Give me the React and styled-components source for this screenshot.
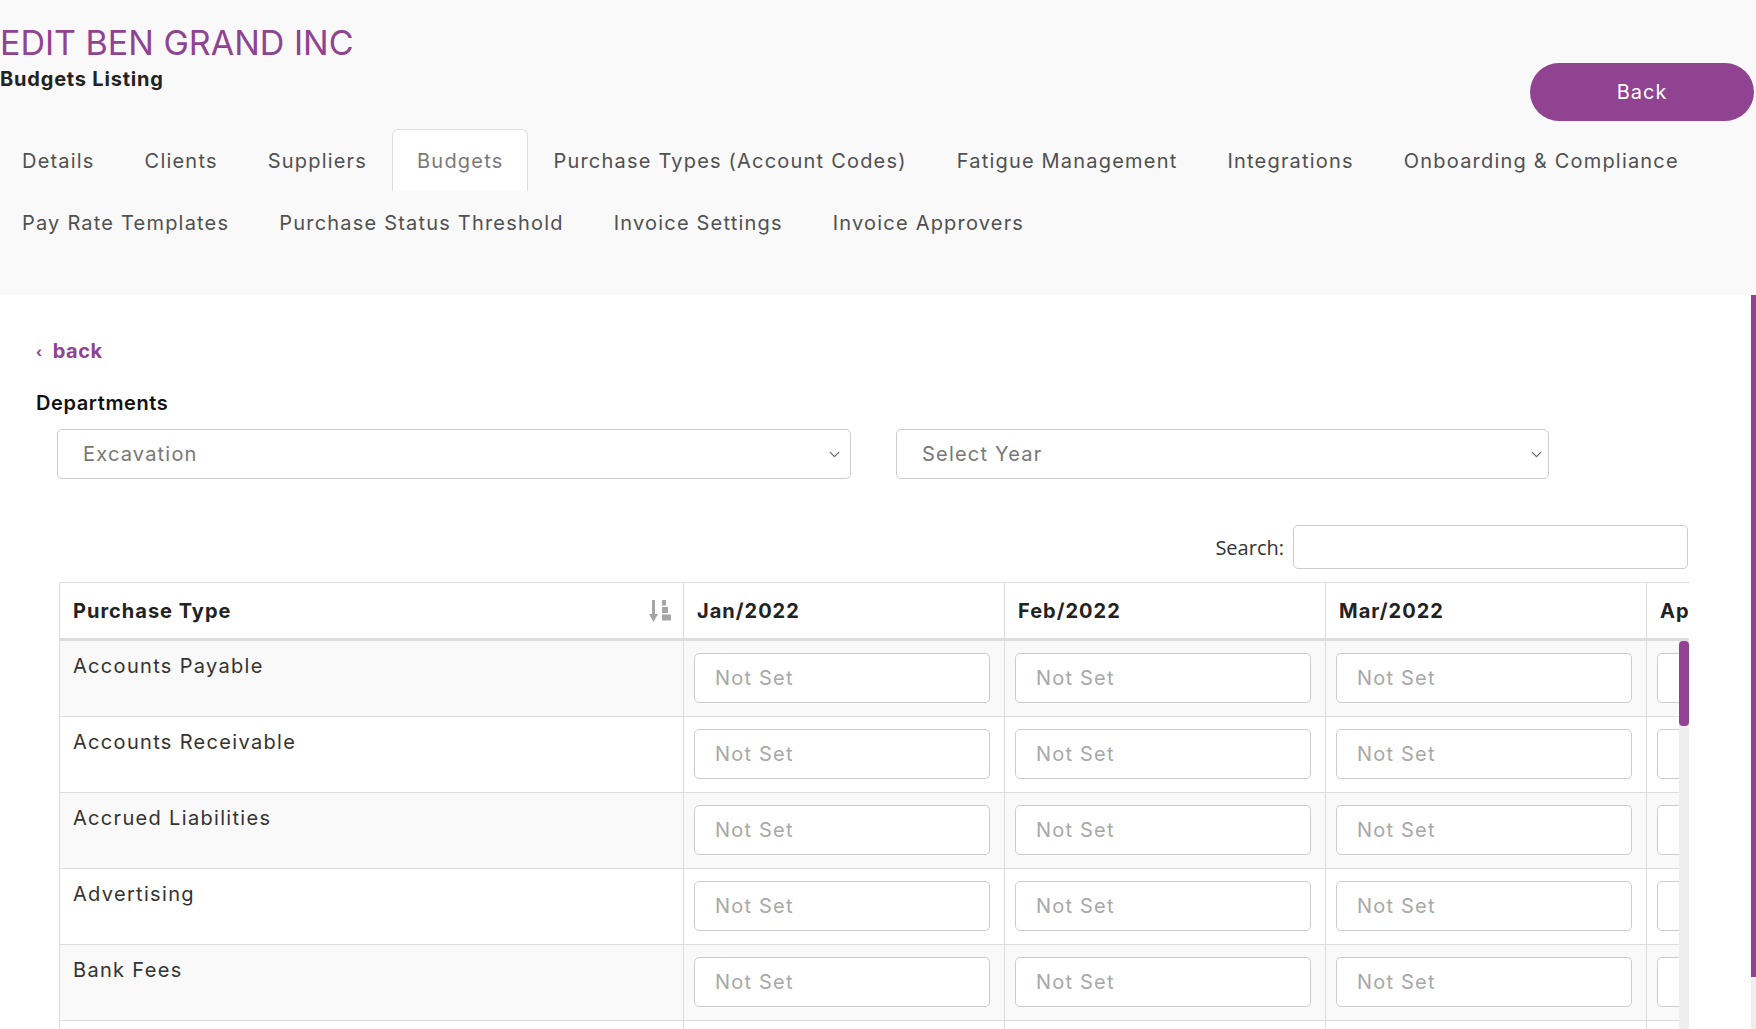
import React from "react";
import styled, { createGlobalStyle } from "styled-components";
import { ChevronDown } from "lucide-react";

const GlobalStyle = createGlobalStyle`
    html, body {
        margin: 0;
        padding: 0;
        height: 100%;
    }
    body {
        font-family: Inter, "Noto Sans", sans-serif;
        letter-spacing: 0.07em;
        color: #333;
        background: #fff;
    }
    * {
        box-sizing: border-box;
    }
`;

const PURPLE = "#8f4391";

const TABS = [
    "Details",
    "Clients",
    "Suppliers",
    "Budgets",
    "Purchase Types (Account Codes)",
    "Fatigue Management",
    "Integrations",
    "Onboarding & Compliance",
    null,
    "Pay Rate Templates",
    "Purchase Status Threshold",
    "Invoice Settings",
    "Invoice Approvers"
];

const MONTHS = ["Jan", "Feb", "Mar", "Apr", "May", "Jun", "Jul", "Aug", "Sep", "Oct", "Nov", "Dec"];

const PURCHASE_TYPES = [
    "Accounts Payable",
    "Accounts Receivable",
    "Accrued Liabilities",
    "Advertising",
    "Bank Fees",
    "Cleaning",
    "Computer Equipment",
    "Consulting & Accounting",
    "Depreciation",
    "Entertainment",
    "Equipment Hire",
    "Freight & Courier",
    "Fuel",
    "General Expenses",
    "Insurance",
    "Interest Expense",
    "Legal Expenses",
    "Light, Power, Heating",
    "Motor Vehicle Expenses",
    "Office Expenses",
    "Printing & Stationery",
    "Rent",
    "Repairs and Maintenance",
    "Subscriptions",
    "Telephone & Internet",
    "Travel - National",
    "Wages and Salaries"
];

const Page = styled.div`
    height: 100vh;
    display: flex;
    flex-direction: column;
    overflow: hidden;
`;

const Header = styled.header`
    flex-shrink: 0;
    height: 295px;
    padding-top: 21px;
    background-color: #f9f9f9;
`;

const TopRow = styled.div`
    display: flex;
    justify-content: space-between;
    align-items: flex-start;
    height: 100px;
    padding-right: 2px;
`;

const Title = styled.h1`
    margin: 0;
    font-size: 34px;
    line-height: 43px;
    font-weight: 400;
    letter-spacing: 0;
    color: ${PURPLE};
`;

const Subtitle = styled.h2`
    margin: 0;
    font-size: 20px;
    line-height: 30px;
    font-weight: 700;
    letter-spacing: 0.04em;
    color: #222;
`;

const BackButton = styled.button`
    margin-top: 42px;
    width: 224px;
    height: 58px;
    border: none;
    border-radius: 29px;
    background-color: ${PURPLE};
    color: #fff;
    font-family: inherit;
    font-size: 20px;
    letter-spacing: 0.05em;
    cursor: pointer;
`;

const Tabs = styled.ul`
    list-style: none;
    margin: 8px 0 0 -3px;
    padding: 0;
    display: flex;
    flex-wrap: wrap;
`;

const Tab = styled.li`
    height: 62px;
    padding: 0 24px;
    display: flex;
    align-items: center;
    font-size: 20px;
    letter-spacing: 0.06em;
    color: ${props => props.$active ? "#7a7a7a" : "#505050"};
    background-color: ${props => props.$active ? "#fff" : "transparent"};
    border: 1px solid ${props => props.$active ? "#dedede" : "transparent"};
    border-bottom: none;
    border-radius: 6px 6px 0 0;
    cursor: pointer;
`;

const TabBreak = styled.li`
    flex-basis: 100%;
    height: 0;
`;

const ContentFrame = styled.div`
    position: relative;
    flex: 1;
    min-height: 0;
`;

const Content = styled.main`
    height: 100%;
    overflow: hidden;
    padding: 41px 0 16px 36px;
`;

const Rail = styled.div`
    position: absolute;
    top: 0;
    right: 0;
    bottom: 0;
    width: ${props => props.$width}px;
    background-color: #eee;
`;

const Thumb = styled.div`
    height: ${props => props.$height}px;
    background-color: ${PURPLE};
    border-radius: ${props => props.$round ? "4px" : "0"};
`;

const BackLink = styled.a`
    display: inline-flex;
    align-items: center;
    gap: 10px;
    font-size: 20px;
    line-height: 30px;
    font-weight: 700;
    letter-spacing: 0.03em;
    color: ${PURPLE};
    text-decoration: none;
    cursor: pointer;
`;

const Chevron = styled.span`
    font-size: 14px;
    line-height: 1;
    margin-top: 2px;
`;

const Label = styled.div`
    margin-top: 22px;
    font-size: 20px;
    line-height: 30px;
    font-weight: 600;
    letter-spacing: 0.03em;
    color: #111;
`;

const Filters = styled.div`
    display: flex;
    gap: 45px;
    margin: 11px 0 0 21px;
`;

const SelectWrap = styled.div`
    position: relative;
    width: ${props => props.$width}px;
    & > svg {
        position: absolute;
        top: 17px;
        right: ${props => props.$arrow}px;
        color: #666;
        pointer-events: none;
    }
`;

const Select = styled.select`
    appearance: none;
    width: 100%;
    height: 50px;
    padding: 0 40px 0 25px;
    border: 1px solid #ccc;
    border-radius: 5px;
    background: #fff;
    font-family: inherit;
    font-size: 20px;
    letter-spacing: 0.06em;
    color: #777;
`;

const SearchRow = styled.div`
    width: 1629px;
    margin: 46px 0 0 23px;
    display: flex;
    justify-content: flex-end;
    align-items: center;
    gap: 9px;
`;

const SearchLabel = styled.label`
    font-family: "Open Sans", sans-serif;
    font-size: 20px;
    letter-spacing: 0;
    color: #333;
`;

const SearchInput = styled.input`
    width: 395px;
    height: 44px;
    border: 1px solid #ccc;
    border-radius: 5px;
    background: #fff;
`;

const TableArea = styled.div`
    width: 1630px;
    margin: 13px 0 0 23px;
`;

const HeadScroll = styled.div`
    overflow: hidden;
`;

const BodyScroll = styled.div`
    position: relative;
    max-height: 420px;
    overflow: hidden;
`;

const Table = styled.table`
    table-layout: fixed;
    width: 4476px;
    border-collapse: separate;
    border-spacing: 0;
`;

const Th = styled.th`
    height: 59px;
    padding: 0 12px 0 13px;
    text-align: left;
    font-size: 20px;
    font-weight: 700;
    letter-spacing: 0.05em;
    color: #222;
    border-top: 1px solid #ddd;
    border-right: 1px solid #ddd;
    border-bottom: 3px solid #ddd;
    &:first-child {
        border-left: 1px solid #ddd;
    }
`;

const HeadCell = styled.div`
    display: flex;
    justify-content: space-between;
    align-items: center;
`;

const SortIcon = styled.svg`
    width: 22px;
    height: 22px;
    fill: #a5a5a5;
    flex-shrink: 0;
`;

const Row = styled.tr`
    background-color: ${props => props.$odd ? "#f9f9f9" : "#fff"};
`;

const Td = styled.td`
    height: 76px;
    padding: 12px 14px 13px 10px;
    vertical-align: top;
    border-right: 1px solid #ddd;
    border-bottom: 1px solid #ddd;
    &:first-child {
        border-left: 1px solid #ddd;
        padding-left: 13px;
    }
`;

const TypeName = styled.div`
    margin-top: -2px;
    font-size: 20px;
    line-height: 30px;
    letter-spacing: 0.066em;
    color: #333;
`;

const BudgetInput = styled.input`
    display: block;
    width: 100%;
    height: 50px;
    padding: 0 20px;
    border: 1px solid #ccc;
    border-radius: 5px;
    background: #fff;
    font-family: inherit;
    font-size: 20px;
    letter-spacing: 0.06em;
    color: #333;
    &::placeholder {
        color: #a8a8a8;
    }
`;

function SortAscIcon() {
    return (
        <SortIcon viewBox="0 0 22 22">
            <rect x="3" y="0" width="3" height="15" />
            <polygon points="0,14 9,14 4.5,22" />
            <rect x="13" y="0" width="4" height="5.5" />
            <rect x="13" y="7" width="6" height="6" />
            <rect x="13" y="14.5" width="9" height="6" />
        </SortIcon>
    );
}

function Columns() {
    return (
        <colgroup>
            <col style={{ width: 625 }} />
            {MONTHS.map(month => <col key={month} style={{ width: 321 }} />)}
        </colgroup>
    );
}

function App() {
    return (
        <Page>
            <GlobalStyle />
            <Header>
                <TopRow>
                    <div>
                        <Title>EDIT BEN GRAND INC</Title>
                        <Subtitle>Budgets Listing</Subtitle>
                    </div>
                    <BackButton>Back</BackButton>
                </TopRow>
                <Tabs>
                    {TABS.map((tab, index) => tab ? (
                        <Tab key={tab} $active={tab === "Budgets"}>{tab}</Tab>
                    ) : (
                        <TabBreak key={index} />
                    ))}
                </Tabs>
            </Header>
            <ContentFrame>
                <Content>
                    <BackLink><Chevron>‹</Chevron>back</BackLink>
                    <Label>Departments</Label>
                    <Filters>
                        <SelectWrap $width={794} $arrow={8}>
                            <Select defaultValue="excavation">
                                <option value="excavation">Excavation</option>
                                <option value="civil">Civil Works</option>
                            </Select>
                            <ChevronDown size={17} strokeWidth={1.8} />
                        </SelectWrap>
                        <SelectWrap $width={653} $arrow={4}>
                            <Select defaultValue="">
                                <option value="">Select Year</option>
                                <option value="2022">2022</option>
                                <option value="2023">2023</option>
                            </Select>
                            <ChevronDown size={17} strokeWidth={1.8} />
                        </SelectWrap>
                    </Filters>
                    <SearchRow>
                        <SearchLabel htmlFor="budget-search">Search:</SearchLabel>
                        <SearchInput id="budget-search" type="search" />
                    </SearchRow>
                    <TableArea>
                        <HeadScroll>
                            <Table>
                                <Columns />
                                <thead>
                                    <tr>
                                        <Th>
                                            <HeadCell>
                                                Purchase Type
                                                <SortAscIcon />
                                            </HeadCell>
                                        </Th>
                                        {MONTHS.map(month => <Th key={month}>{month}/2022</Th>)}
                                    </tr>
                                </thead>
                            </Table>
                        </HeadScroll>
                        <BodyScroll>
                            <Table>
                                <Columns />
                                <tbody>
                                    {PURCHASE_TYPES.map((type, index) => (
                                        <Row key={type} $odd={index % 2 === 0}>
                                            <Td><TypeName>{type}</TypeName></Td>
                                            {MONTHS.map(month => (
                                                <Td key={month}>
                                                    <BudgetInput type="text" placeholder="Not Set" />
                                                </Td>
                                            ))}
                                        </Row>
                                    ))}
                                </tbody>
                            </Table>
                            <Rail $width={10}>
                                <Thumb $height={85} $round />
                            </Rail>
                        </BodyScroll>
                    </TableArea>
                </Content>
                <Rail $width={5}>
                    <Thumb $height={682} />
                </Rail>
            </ContentFrame>
        </Page>
    );
}

export default App;
